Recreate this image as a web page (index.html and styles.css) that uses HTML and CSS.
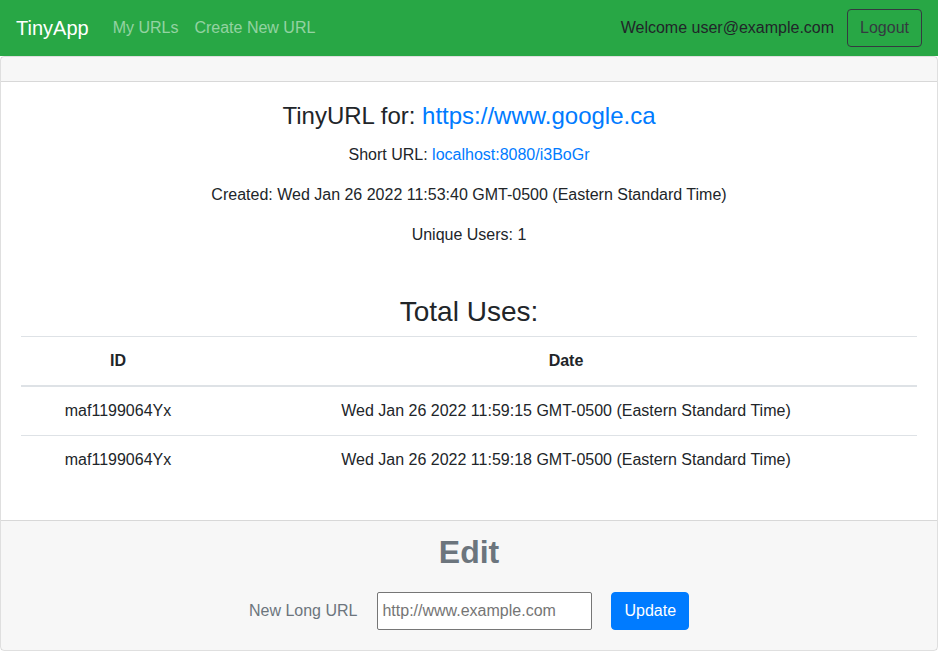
FILE: index.html
```html
<!DOCTYPE html>
<html lang="en">
<head>
<meta charset="utf-8">
<title>TinyApp</title>
<link rel="stylesheet" href="styles.css">
</head>
<body>
<nav class="navbar">
  <div class="nav-left">
    <a class="brand" href="#">TinyApp</a>
    <a class="nav-link" href="#">My URLs</a>
    <a class="nav-link" href="#">Create New URL</a>
  </div>
  <div class="nav-right">
    <span class="welcome">Welcome user@example.com</span>
    <button class="btn btn-outline-dark">Logout</button>
  </div>
</nav>
<div class="card">
  <div class="card-header"></div>
  <div class="card-body">
    <h4 class="title">TinyURL for: <a href="#">https://www.google.ca</a></h4>
    <p class="info first">Short URL: <a href="#">localhost:8080/i3BoGr</a></p>
    <p class="info">Created: Wed Jan 26 2022 11:53:40 GMT-0500 (Eastern Standard Time)</p>
    <p class="info">Unique Users: 1</p>
    <h3 class="uses">Total Uses:</h3>
    <table class="table">
      <thead>
        <tr><th class="col-id">ID</th><th>Date</th></tr>
      </thead>
      <tbody>
        <tr><td>maf1199064Yx</td><td>Wed Jan 26 2022 11:59:15 GMT-0500 (Eastern Standard Time)</td></tr>
        <tr><td>maf1199064Yx</td><td>Wed Jan 26 2022 11:59:18 GMT-0500 (Eastern Standard Time)</td></tr>
      </tbody>
    </table>
  </div>
  <div class="card-footer">
    <h2 class="edit">Edit</h2>
    <form class="form-inline">
      <label class="label" for="longURL">New Long URL</label>
      <input class="input" id="longURL" type="text" placeholder="http://www.example.com">
      <button class="btn btn-primary" type="button">Update</button>
    </form>
  </div>
</div>
</body>
</html>
```
FILE: styles.css
```css
* { box-sizing: border-box; }
html, body { margin: 0; }
body {
  font-family: "Liberation Sans", Arial, sans-serif;
  font-size: 16px;
  line-height: 1.5;
  color: #212529;
  background: #fff;
}
a { color: #007bff; text-decoration: none; }

.navbar {
  background: #28a745;
  height: 56px;
  padding: 8px 16px;
  display: flex;
  align-items: center;
  justify-content: space-between;
}
.nav-left { display: flex; align-items: center; }
.brand {
  color: #fff;
  font-size: 20px;
  line-height: 30px;
  padding: 5px 0;
  margin-right: 16px;
}
.nav-link {
  color: rgba(255,255,255,.5);
  padding: 8px;
}
.nav-right { display: flex; align-items: center; gap: 13px; }
.welcome { color: #212529; }

.btn {
  font-family: inherit;
  font-size: 16px;
  line-height: 24px;
  padding: 6px 12px;
  border-radius: 4px;
  border: 1px solid transparent;
  background: transparent;
  cursor: pointer;
}
.btn-outline-dark { color: #343a40; border-color: #343a40; }
.btn-primary { color: #fff; background: #007bff; border-color: #007bff; }

.card {
  border: 1px solid rgba(0,0,0,.125);
  border-radius: 4px;
  height: 595px;
  display: flex;
  flex-direction: column;
}
.card-header {
  height: 25px;
  background: rgba(0,0,0,.03);
  border-bottom: 1px solid rgba(0,0,0,.125);
}
.card-body {
  padding: 20px;
  text-align: center;
}
.title {
  font-size: 24px;
  font-weight: 400;
  line-height: 1.2;
  margin: 0 0 12px;
}
.info { margin: 0 0 16px; }
.uses {
  font-size: 28px;
  font-weight: 400;
  line-height: 1.2;
  margin: 48px 0 8px;
}
.table {
  width: 100%;
  border-collapse: collapse;
  margin-bottom: 16px;
}
.table th, .table td {
  padding: 12px;
  text-align: center;
  border-top: 1px solid #dee2e6;
  line-height: 24px;
}
.table thead th {
  border-bottom: 2px solid #dee2e6;
  font-weight: 700;
}
.col-id { width: 194px; }

.card-footer {
  flex: 1;
  background: rgba(0,0,0,.03);
  border-top: 1px solid rgba(0,0,0,.125);
  padding: 12px 20px;
  text-align: center;
}
.edit {
  font-size: 32px;
  font-weight: 700;
  line-height: 1.2;
  color: #6c757d;
  margin: 0 0 20px;
}
.form-inline {
  display: flex;
  justify-content: center;
  align-items: center;
}
.label { color: #6c757d; margin-right: 20px; }
.input {
  width: 215px;
  height: 38px;
  font-family: inherit;
  font-size: 16px;
  padding: 1px 4px;
  border: 1px solid #767676;
  border-radius: 2px;
  background: #fff;
  margin-right: 19px;
}
.input::placeholder { color: #757575; }
```
